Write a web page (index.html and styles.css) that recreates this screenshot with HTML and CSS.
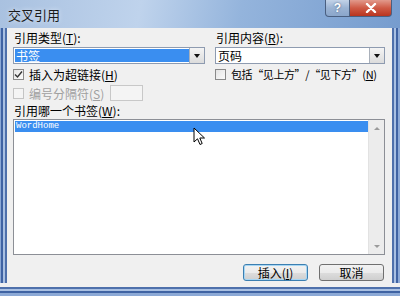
FILE: index.html
```html
<!DOCTYPE html>
<html>
<head>
  <meta charset="UTF-8">
  <title>交叉引用</title>
  <link rel="stylesheet" href="styles.css">
</head>
<body>
  <div class="window">
    <div class="titlebar">
      <span class="title">交叉引用</span>
      <div class="caption-btns">
        <span class="cap-btn help">?</span>
        <span class="cap-btn close">
          <svg width="12" height="10" viewBox="0 0 12 10"><path d="M2 1 L10 9 M10 1 L2 9" stroke="#fff" stroke-width="2.4" stroke-linecap="round"/></svg>
        </span>
      </div>
    </div>
    <div class="middle">
      <div class="frame-left"></div>
      <div class="client">
        <div class="cols">
          <div class="col">
            <div class="label">引用类型(<u>T</u>):</div>
            <div class="combo active">
              <span class="combo-text">书签</span>
              <span class="combo-btn"><span class="tri"></span></span>
            </div>
            <div class="check">
              <span class="box">
                <svg width="9" height="9" viewBox="0 0 9 9"><path d="M1 4.5 L3.5 7 L8 1.5" fill="none" stroke="#333" stroke-width="1.4"/></svg>
              </span>
              <span class="check-text">插入为超链接(<u>H</u>)</span>
            </div>
            <div class="check sep-row disabled">
              <span class="box"></span>
              <span class="check-text">编号分隔符(<u>S</u>)</span>
              <span class="sep-input"></span>
            </div>
          </div>
          <div class="col">
            <div class="label">引用内容(<u>R</u>):</div>
            <div class="combo">
              <span class="combo-text">页码</span>
              <span class="combo-btn"><span class="tri"></span></span>
            </div>
            <div class="check">
              <span class="box"></span>
              <span class="check-text narrow">包括“见上方” / “见下方” (<u>N</u>)</span>
            </div>
          </div>
        </div>
        <div class="label">引用哪一个书签(<u>W</u>):</div>
        <div class="listbox">
          <div class="list-items">
            <div class="item selected">WordHome</div>
          </div>
          <div class="scrollbar">
            <span class="arrow up"></span>
            <span class="arrow down"></span>
          </div>
        </div>
        <div class="buttons">
          <button class="btn default">插入(<u>I</u>)</button>
          <button class="btn">取消</button>
        </div>
        <svg class="cursor" width="13" height="20" viewBox="0 0 13 20">
          <path d="M1 1 L1 15 L4.5 11.8 L7 17.5 L9.2 16.5 L6.8 11 L11.5 11 Z" fill="#fff" stroke="#000" stroke-width="1"/>
        </svg>
      </div>
      <div class="frame-right"></div>
    </div>
    <div class="frame-bottom"></div>
  </div>
</body>
</html>
```

FILE: styles.css
```css
body {
  margin: 0;
  font-family: "Noto Sans CJK SC", "Liberation Sans", sans-serif;
  font-size: 12px;
  color: #000;
}
.window {
  width: 400px;
  height: 296px;
  display: flex;
  flex-direction: column;
  background: #6f93c8;
  overflow: hidden;
}

/* Title bar */
.titlebar {
  height: 28px;
  display: flex;
  justify-content: space-between;
  align-items: flex-start;
  background: linear-gradient(100deg, #a9c1e0 0%, #bfd3ec 35%, #94b4dc 60%, #769cce 100%);
}
.title {
  margin: 7px 0 0 8px;
  font-size: 13px;
  line-height: 15px;
  color: #1a1a1a;
  text-shadow: 0 0 4px #e6eef8;
}
.caption-btns {
  display: flex;
  margin-right: 8px;
}
.cap-btn {
  height: 17px;
  display: flex;
  align-items: center;
  justify-content: center;
  border: 1px solid #4a5f80;
  border-top: none;
  box-sizing: border-box;
}
.help {
  width: 25px;
  border-radius: 0 0 0 4px;
  background: linear-gradient(#c3d3e8, #9bb3d3 50%, #8aa6cb);
  color: #fff;
  font-family: "Liberation Sans", sans-serif;
  font-weight: bold;
  font-size: 12px;
  text-shadow: 0 0 2px #3c5474;
}
.close {
  width: 42px;
  border-left: none;
  border-radius: 0 0 4px 0;
  background: linear-gradient(#e29a8c, #cf5a45 50%, #b8341f);
}

/* Frame */
.middle {
  flex: 1;
  display: flex;
  min-height: 0;
}
.frame-left {
  width: 7px;
  background: linear-gradient(90deg, #8ca9d6 0, #8ca9d6 1px, #3f63a3 1px, #3f63a3 3px, #a9c0e2 3px, #a9c0e2 5px, #4e70ab 5px, #4e70ab 7px);
}
.frame-right {
  width: 8px;
  background: linear-gradient(90deg, #4e70ab 0, #4e70ab 2px, #a9c0e2 2px, #a9c0e2 4px, #3f63a3 4px, #3f63a3 6px, #8ca9d6 6px);
}
.frame-bottom {
  height: 13px;
  background: linear-gradient(#f0f0f0 0, #f0f0f0 4px, #4e70ab 4px, #4e70ab 6px, #a9c0e2 6px, #a9c0e2 8px, #3f63a3 8px, #3f63a3 10px, #8ca9d6 10px);
}
.client {
  flex: 1;
  position: relative;
  background: #f0f0f0;
  padding: 3px 7px 0 6px;
  display: flex;
  flex-direction: column;
}

.cols {
  display: grid;
  grid-template-columns: 192px 170px;
  column-gap: 10px;
}
.col {
  display: flex;
  flex-direction: column;
}
.label {
  height: 14px;
  line-height: 14px;
  padding-left: 1px;
}
.cols .label {
  margin-bottom: 2px;
}

/* Combo boxes */
.combo {
  height: 17px;
  display: flex;
  border: 1px solid #8e9bb0;
  background: #fff;
  box-sizing: border-box;
}
.combo-text {
  flex: 1;
  line-height: 15px;
  padding-left: 2px;
}
.combo.active .combo-text {
  background: #3a8ef0;
  color: #fff;
  margin: 1px 0 1px 1px;
  line-height: 13px;
  padding-left: 1px;
}
.combo-btn {
  width: 14px;
  display: flex;
  align-items: center;
  justify-content: center;
  border-left: 1px solid #a9b0ba;
  background: linear-gradient(#f4f4f4, #dcdcdc);
}
.tri {
  width: 0;
  height: 0;
  border-left: 3px solid transparent;
  border-right: 3px solid transparent;
  border-top: 4px solid #111;
}

/* Checkboxes */
.check {
  height: 13px;
  margin-top: 4px;
  display: flex;
  align-items: center;
  gap: 5px;
  line-height: 13px;
}
.check-text {
  white-space: nowrap;
}
.check-text.narrow {
  font-size: 11px;
  letter-spacing: -0.4px;
  word-spacing: -2px;
}
.box {
  width: 11px;
  height: 11px;
  flex: none;
  box-sizing: border-box;
  border: 1px solid #8a8a8a;
  background: linear-gradient(135deg, #e4e4e4, #fbfbfb);
  display: flex;
  align-items: center;
  justify-content: center;
}
.sep-row {
  height: 16px;
  margin-top: 4px;
}
.disabled {
  color: #a0a0a0;
}
.disabled .box {
  border-color: #c4c4c4;
  background: #f4f4f4;
}
.sep-input {
  width: 33px;
  height: 16px;
  margin-left: 1px;
  box-sizing: border-box;
  border: 1px solid #c8c8c8;
  background: #f4f4f4;
}
.client > .label {
  margin-top: 3px;
}

/* List of bookmarks */
.listbox {
  margin-top: 1px;
  height: 136px;
  display: flex;
  border: 1px solid #8c8f96;
  background: #fff;
  box-sizing: border-box;
}
.list-items {
  flex: 1;
  padding: 1px 0 0 1px;
}
.item {
  height: 11px;
  line-height: 11px;
  font-family: "Liberation Mono", monospace;
  font-size: 9px;
  padding-left: 1px;
}
.item.selected {
  background: #3a8ef0;
  color: #fff;
}
.scrollbar {
  width: 15px;
  background: #ececec;
  border-left: 1px solid #e2e2e2;
  display: flex;
  flex-direction: column;
  justify-content: space-between;
  align-items: center;
  padding: 7px 0 6px;
}
.arrow {
  width: 0;
  height: 0;
  border-left: 3px solid transparent;
  border-right: 3px solid transparent;
}
.arrow.up {
  border-bottom: 3px solid #9a9a9a;
}
.arrow.down {
  border-top: 3px solid #9a9a9a;
}

/* Buttons */
.buttons {
  margin-top: 9px;
  display: flex;
  justify-content: flex-end;
  gap: 11px;
  padding-right: 1px;
}
.btn {
  width: 65px;
  height: 17px;
  padding: 0;
  font-family: inherit;
  font-size: 12px;
  line-height: 15px;
  color: #000;
  border: 1px solid #707070;
  border-radius: 3px;
  background: linear-gradient(#f2f2f2 0, #ebebeb 50%, #dddddd 51%, #cfcfcf 100%);
}
.btn.default {
  border-color: #3c7fb1;
  box-shadow: inset 0 0 0 1px #a6d6f4;
}

/* Mouse pointer over the list */
.cursor {
  position: absolute;
  left: 186px;
  top: 99px;
}
```
